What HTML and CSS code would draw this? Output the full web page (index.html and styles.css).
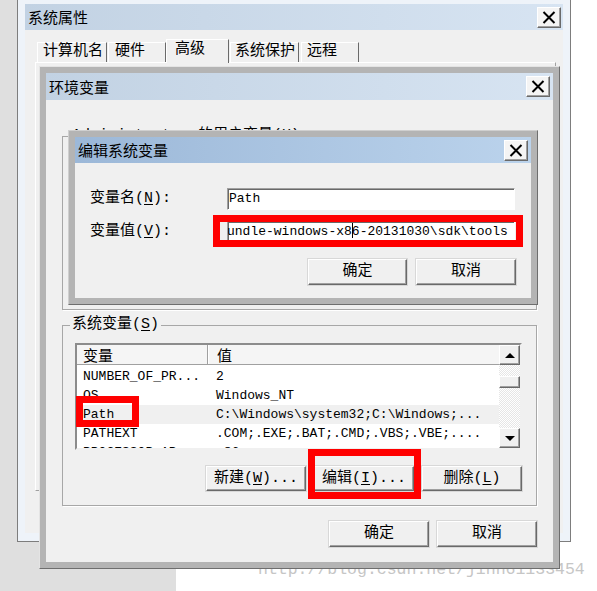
FILE: index.html
```html
<!DOCTYPE html>
<html lang="zh-CN">
<head>
    <meta charset="UTF-8">
    <title>编辑系统变量</title>
    <link rel="stylesheet" href="styles.css">
</head>
<body>
    <div class="desk">
        <div class="desk-left"></div>
        <div class="watermark">http://blog.csdn.net/jinn61133454</div>

        <!-- 系统属性 -->
        <div class="win win-sys">
            <div class="titlebar">
                <span class="tb-text">系统属性</span>
                <span class="close"><svg width="14" height="13" viewBox="0 0 14 13"><path d="M1.5 1 L12.5 12 M12.5 1 L1.5 12" stroke="#000" stroke-width="2"/></svg></span>
            </div>
            <div class="sys-body">
                <div class="tabs">
                    <div class="tab t1">计算机名</div>
                    <div class="tab t2">硬件</div>
                    <div class="tab t3 active">高级</div>
                    <div class="tab t4">系统保护</div>
                    <div class="tab t5">远程</div>
                </div>
                <div class="tab-panel"></div>
            </div>
        </div>

        <!-- 环境变量 -->
        <div class="win win-env">
            <div class="titlebar tb-env">
                <span class="tb-text">环境变量</span>
                <span class="close"><svg width="14" height="13" viewBox="0 0 14 13"><path d="M1.5 1 L12.5 12 M12.5 1 L1.5 12" stroke="#000" stroke-width="2"/></svg></span>
            </div>
            <div class="env-body">
                <fieldset class="group group-user">
                    <legend>Administrator 的用户变量(<u>U</u>)</legend>
                </fieldset>

                <fieldset class="group group-sys">
                    <legend>系统变量(<u>S</u>)</legend>
                    <div class="listview">
                        <div class="lv-main">
                            <div class="lv-head">
                                <div class="lv-hcell c1">变量</div>
                                <div class="lv-hcell c2">值</div>
                            </div>
                            <div class="lv-row"><span class="c1">NUMBER_OF_PR...</span><span class="c2">2</span></div>
                            <div class="lv-row"><span class="c1">OS</span><span class="c2">Windows_NT</span></div>
                            <div class="lv-row sel"><span class="c1">Path</span><span class="c2">C:\Windows\system32;C:\Windows;...</span></div>
                            <div class="lv-row"><span class="c1">PATHEXT</span><span class="c2">.COM;.EXE;.BAT;.CMD;.VBS;.VBE;....</span></div>
                            <div class="lv-row"><span class="c1">PROCESSOR_AR...</span><span class="c2">x86</span></div>
                        </div>
                        <div class="scrollbar">
                            <div class="sb-btn"><span class="arrow up"></span></div>
                            <div class="sb-track"><div class="sb-thumb"></div></div>
                            <div class="sb-btn"><span class="arrow down"></span></div>
                        </div>
                    </div>
                    <div class="btn-row">
                        <div class="btn">新建(<u>W</u>)...</div>
                        <div class="btn">编辑(<u>I</u>)...</div>
                        <div class="btn">删除(<u>L</u>)</div>
                    </div>
                </fieldset>

                <div class="btn-row dialog-btns">
                    <div class="btn">确定</div>
                    <div class="btn">取消</div>
                </div>
            </div>
        </div>

        <!-- 编辑系统变量 -->
        <div class="win win-edit">
            <div class="titlebar tb-active">
                <span class="tb-text">编辑系统变量</span>
                <span class="close"><svg width="14" height="13" viewBox="0 0 14 13"><path d="M1.5 1 L12.5 12 M12.5 1 L1.5 12" stroke="#000" stroke-width="2"/></svg></span>
            </div>
            <div class="edit-body">
                <div class="field">
                    <label>变量名(<u>N</u>):</label>
                    <div class="input">Path</div>
                </div>
                <div class="field">
                    <label>变量值(<u>V</u>):</label>
                    <div class="input"><span class="scrolled">undle-windows-x8<span class="caret"></span>6-20131030\sdk\tools</span></div>
                </div>
                <div class="btn-row edit-btns">
                    <div class="btn">确定</div>
                    <div class="btn">取消</div>
                </div>
            </div>
        </div>

        <!-- 红框标注 -->
        <div class="mark mark-value"></div>
        <div class="mark mark-path"></div>
        <div class="mark mark-edit"></div>
    </div>
</body>
</html>
```

FILE: styles.css
```css
* {
    box-sizing: border-box;
}

body {
    margin: 0;
    background: #fff;
    font-family: "Liberation Mono", "Noto Sans CJK SC", monospace;
    font-size: 15px;
    line-height: 18px;
    color: #000;
}

u {
    text-decoration: underline;
    text-underline-offset: 2px;
}

.desk {
    position: relative;
    width: 597px;
    height: 591px;
    overflow: hidden;
}

.desk-left {
    position: absolute;
    left: 0;
    top: 0;
    width: 176px;
    height: 591px;
    background: #dfdfdf;
}

.watermark {
    position: absolute;
    left: 258px;
    top: 559px;
    font-family: "Liberation Mono", monospace;
    font-size: 16.5px;
    line-height: 22px;
    color: #c6c6c6;
    white-space: nowrap;
}

/* 窗口 */
.win {
    position: absolute;
    display: flex;
    flex-direction: column;
}

.win-sys {
    left: 17px;
    top: -3px;
    width: 554px;
    height: 545px;
    border: 1px solid #7d7d7d;
    background: #eef3f9;
    padding: 6px 7px 8px 7px;
}

.win-env {
    left: 39px;
    top: 66px;
    width: 521px;
    height: 503px;
    border: 1px solid;
    border-color: #e4e4e4 #6e6e6e #6e6e6e #e4e4e4;
    background: #b4b4b4;
    padding: 6px;
}

.win-edit {
    left: 68px;
    top: 130px;
    width: 470px;
    height: 175px;
    border: 1px solid;
    border-color: #cfcfcf #6e6e6e #6e6e6e #cfcfcf;
    background: #b4b4b4;
    padding: 6px;
}

/* 标题栏 */
.titlebar {
    display: flex;
    align-items: center;
    justify-content: space-between;
    flex: none;
    height: 26px;
    padding: 0 2px 0 3px;
    background: linear-gradient(to right, #c2d2e3, #d7e4f2);
    font-family: "Noto Sans CJK SC", sans-serif;
}

.tb-env {
    height: 27px;
    padding-right: 3px;
}

.tb-active {
    padding-right: 3px;
    background: linear-gradient(to right, #9cb8d8, #bbd3ec);
}

.close {
    display: flex;
    align-items: center;
    justify-content: center;
    width: 24px;
    height: 21px;
    background: #f4f4f4;
    border: 1px solid;
    border-color: #fff #6a6a6a #6a6a6a #fff;
    box-shadow: inset -1px -1px 0 #a0a0a0;
}

/* 系统属性 */
.sys-body {
    flex: 1;
    background: #f0f0f0;
    padding: 9px 7px 0 10px;
}

.tabs {
    display: flex;
    align-items: flex-end;
    height: 23px;
    padding-left: 2px;
    position: relative;
    z-index: 1;
}

.tab {
    height: 20px;
    padding-left: 5px;
    border: 1px solid;
    border-bottom: none;
    border-color: #fff #6a6a6a #6a6a6a #fff;
    white-space: nowrap;
}

.t1 { width: 70px; }
.t2 { width: 58px; margin-left: 1px; padding-left: 6px; }
.t3 { width: 63px; }
.t4 { width: 69px; margin-left: 1px; padding-left: 4px; }
.t5 { width: 58px; margin-left: 2px; }

.tab.active {
    height: 24px;
    margin-bottom: -1px;
    padding-left: 8px;
    padding-top: 1px;
    background: #f0f0f0;
}

.tab-panel {
    height: 429px;
    border: 1px solid;
    border-color: #fff #a0a0a0 #a0a0a0 #fff;
}

/* 环境变量 */
.env-body {
    flex: 1;
    display: flex;
    flex-direction: column;
    background: #f0f0f0;
    padding: 27px 16px 0 16px;
}

.group {
    margin: 0;
    padding: 0 14px 14px 12px;
    border: 1px solid #a7a7a7;
    box-shadow: 1px 1px 0 #fff;
    min-width: 0;
}

.group legend {
    margin-left: -5px;
    padding: 0 2px;
    white-space: nowrap;
}

.group-user {
    height: 183px;
}

.group-sys {
    margin-top: 6px;
    padding-top: 9px;
}

.listview {
    display: flex;
    height: 107px;
    border: 2px solid;
    border-color: #8c8c8c #f0f0f0 #f0f0f0 #8c8c8c;
    background: #fff;
}

.lv-main {
    flex: 1;
    overflow: hidden;
}

.lv-head {
    display: grid;
    grid-template-columns: 131px 1fr;
    height: 20px;
    margin-bottom: 2px;
    background: #f5f5f5;
    border-bottom: 1px solid #a0a0a0;
    font-family: "Noto Sans CJK SC", sans-serif;
}

.lv-hcell {
    padding-left: 6px;
    line-height: 19px;
}

.lv-hcell.c1 {
    border-right: 1px solid #a0a0a0;
    box-shadow: 1px 0 0 #fff;
}

.lv-hcell.c2 {
    padding-left: 9px;
}

.lv-row {
    display: grid;
    grid-template-columns: 132px 1fr;
    height: 19px;
    font-size: 13px;
    line-height: 19px;
    white-space: nowrap;
}

.lv-row .c1 {
    padding-left: 6px;
}

.lv-row .c2 {
    padding-left: 7px;
}

.lv-row.sel {
    background: #f0f0f0;
}

.scrollbar {
    display: flex;
    flex-direction: column;
    width: 21px;
}

.sb-btn {
    display: flex;
    align-items: center;
    justify-content: center;
    height: 20px;
    background: #f0f0f0;
    border: 1px solid;
    border-color: #fff #696969 #696969 #fff;
    box-shadow: inset -1px -1px 0 #a0a0a0;
}

.sb-track {
    flex: 1;
    padding-top: 11px;
    background: repeating-conic-gradient(#e6e6e6 0 25%, #fff 0 50%) 0 0 / 2px 2px;
}

.sb-thumb {
    height: 12px;
    background: #f0f0f0;
    border: 1px solid;
    border-color: #fff #696969 #696969 #fff;
    box-shadow: inset -1px -1px 0 #a0a0a0;
}

.arrow {
    width: 0;
    height: 0;
    border-left: 5px solid transparent;
    border-right: 5px solid transparent;
}

.arrow.up {
    border-bottom: 5px solid #000;
}

.arrow.down {
    border-top: 5px solid #000;
}

.btn-row {
    display: flex;
    justify-content: flex-end;
    gap: 8px;
    margin-top: 16px;
}

.btn {
    display: flex;
    align-items: center;
    justify-content: center;
    width: 100px;
    height: 25px;
    background: #f0f0f0;
    border: 1px solid;
    border-color: #fff #696969 #696969 #fff;
    box-shadow: inset -1px -1px 0 #a0a0a0, 0 0 0 1px #d8d8d8;
    white-space: nowrap;
}

.dialog-btns {
    margin-top: 15px;
}

.dialog-btns .btn {
    height: 26px;
}

/* 编辑系统变量 */
.edit-body {
    flex: 1;
    background: #f0f0f0;
    padding: 25px 15px 0 15px;
}

.field {
    display: flex;
    align-items: center;
    height: 22px;
}

.field + .field {
    margin-top: 11px;
}

.field label {
    width: 137px;
}

.input {
    width: 288px;
    height: 22px;
    padding-left: 1px;
    background: #fff;
    border: 1px solid;
    border-color: #a0a0a0 #fff #fff #a0a0a0;
    box-shadow: inset 1px 1px 0 #696969;
    font-size: 13px;
    line-height: 20px;
    white-space: nowrap;
    overflow: hidden;
}

.scrolled {
    display: inline-block;
    margin-left: -2px;
}

.caret {
    display: inline-block;
    width: 0;
    height: 15px;
    margin-right: -1px;
    border-left: 1px solid #000;
    vertical-align: -3px;
}

.edit-btns {
    margin-top: 16px;
    gap: 9px;
}

.edit-btns .btn {
    height: 26px;
}

.edit-btns .btn:first-child {
    width: 99px;
}

/* 红框 */
.mark {
    position: absolute;
    border: 7px solid #ff0000;
}

.mark-value {
    left: 213px;
    top: 215px;
    width: 310px;
    height: 32px;
}

.mark-path {
    left: 76px;
    top: 396px;
    width: 63px;
    height: 31px;
}

.mark-edit {
    left: 308px;
    top: 449px;
    width: 113px;
    height: 50px;
}
```
